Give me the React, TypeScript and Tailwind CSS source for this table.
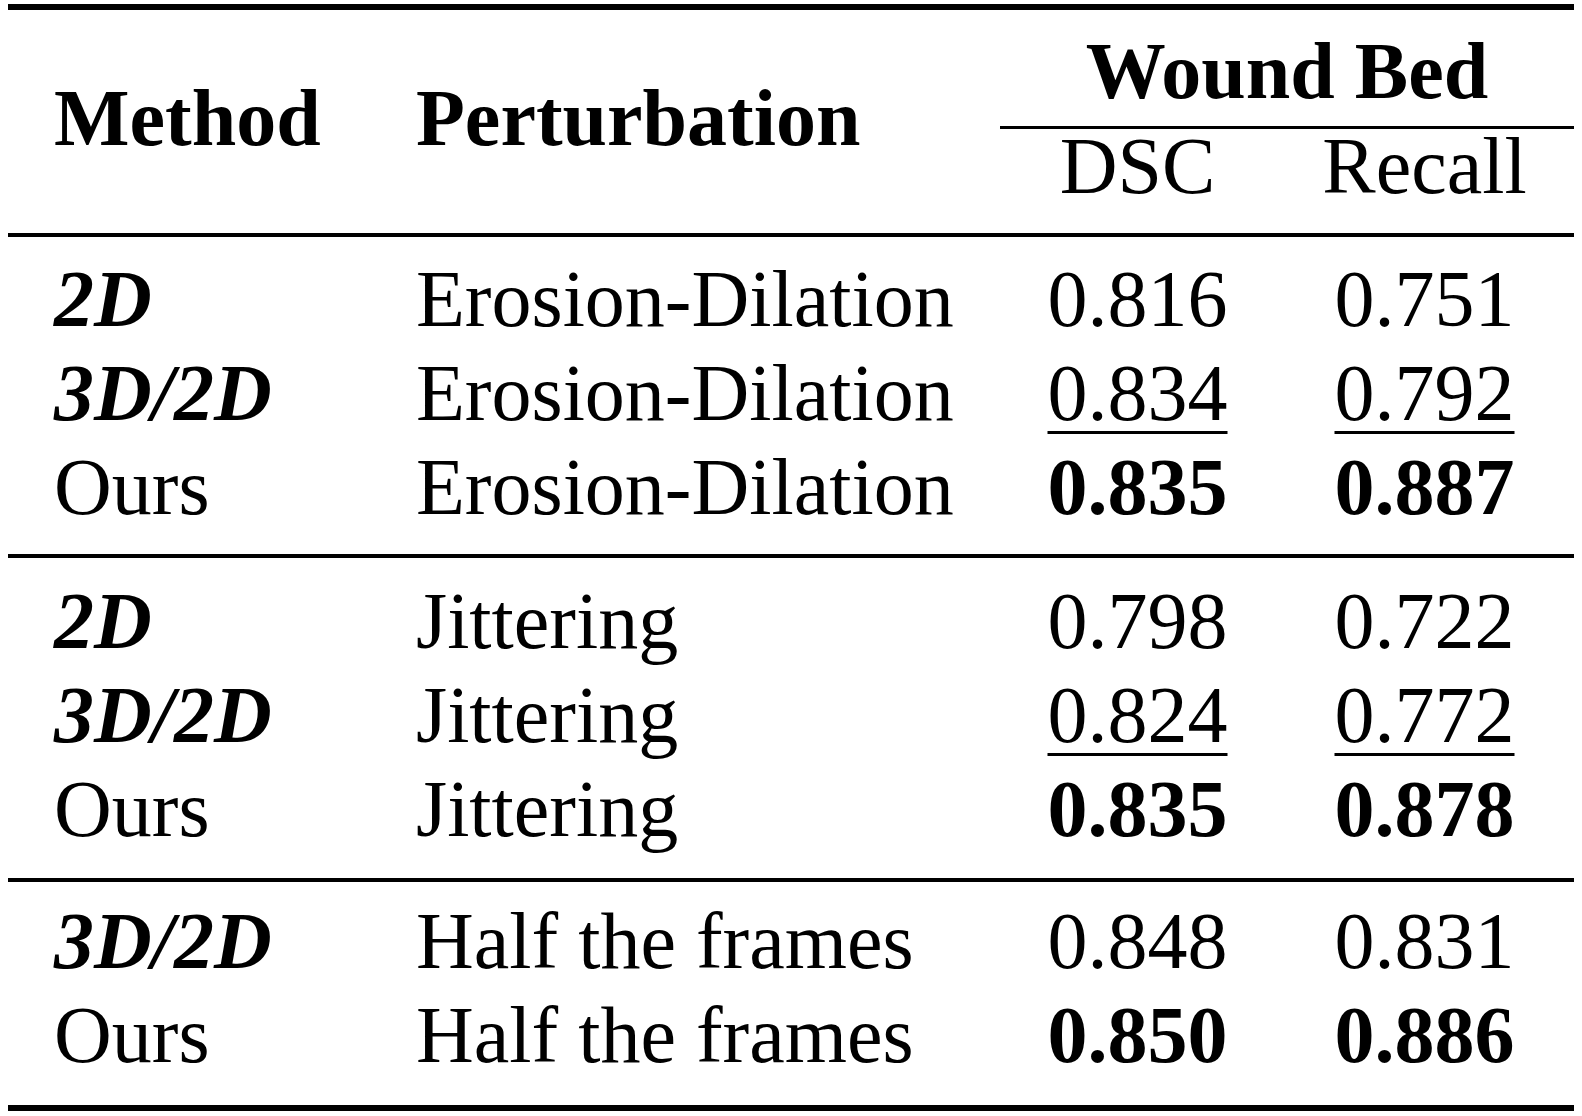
import React from "react";

type S = "n" | "u" | "b";
type Row = { m: string; mi: boolean; p: string; d: string; ds: S; r: string; rs: S };

const groups: { pt: string; pb: string; rows: Row[] }[] = [
  {
    pt: "pt-[15px]",
    pb: "pb-[20px]",
    rows: [
      { m: "2D", mi: true, p: "Erosion-Dilation", d: "0.816", ds: "n", r: "0.751", rs: "n" },
      { m: "3D/2D", mi: true, p: "Erosion-Dilation", d: "0.834", ds: "u", r: "0.792", rs: "u" },
      { m: "Ours", mi: false, p: "Erosion-Dilation", d: "0.835", ds: "b", r: "0.887", rs: "b" },
    ],
  },
  {
    pt: "pt-[16px]",
    pb: "pb-[22px]",
    rows: [
      { m: "2D", mi: true, p: "Jittering", d: "0.798", ds: "n", r: "0.722", rs: "n" },
      { m: "3D/2D", mi: true, p: "Jittering", d: "0.824", ds: "u", r: "0.772", rs: "u" },
      { m: "Ours", mi: false, p: "Jittering", d: "0.835", ds: "b", r: "0.878", rs: "b" },
    ],
  },
  {
    pt: "pt-[12px]",
    pb: "pb-[23px]",
    rows: [
      { m: "3D/2D", mi: true, p: "Half the frames", d: "0.848", ds: "n", r: "0.831", rs: "n" },
      { m: "Ours", mi: false, p: "Half the frames", d: "0.850", ds: "b", r: "0.886", rs: "b" },
    ],
  },
];

const numClass = (s: S) =>
  s === "b"
    ? "font-bold"
    : s === "u"
    ? "underline decoration-[3px] underline-offset-[11px] [text-decoration-skip-ink:none]"
    : "";

const COLS = "grid grid-cols-[408px_584px_275px_299px]";

export default function App() {
  return (
    <div className="w-[1582px] h-[1116px] bg-white text-black font-['Liberation_Serif',serif] text-[80px] leading-[94px] overflow-hidden">
      <div className="ml-[8px] w-[1566px] pt-[4px]">
        <div className="h-[6px] bg-black" />
        {/* header */}
        <div className={`${COLS} h-[223px] items-start`}>
          <div className="pl-[46px] pt-[61px] font-bold whitespace-nowrap">Method</div>
          <div className="pt-[61px] font-bold whitespace-nowrap">Perturbation</div>
          <div className="col-span-2 flex flex-col">
            <div className="pt-[14px] font-bold text-center whitespace-nowrap">Wound Bed</div>
            <div className="mt-[8px] h-[3px] bg-black" />
            <div className="mt-[7px] grid grid-cols-[275px_299px] leading-[60px]">
              <div className="text-center">DSC</div>
              <div className="text-center">Recall</div>
            </div>
          </div>
        </div>
        <div className="h-[4px] bg-black" />
        {groups.map((g, gi) => (
          <React.Fragment key={gi}>
            <div className={`${g.pt} ${g.pb}`}>
              {g.rows.map((r, ri) => (
                <div key={ri} className={COLS}>
                  <div className={`pl-[46px] whitespace-nowrap ${r.mi ? "font-bold italic" : ""}`}>{r.m}</div>
                  <div className="whitespace-nowrap">{r.p}</div>
                  <div className="text-center">
                    <span className={numClass(r.ds)}>{r.d}</span>
                  </div>
                  <div className="text-center">
                    <span className={numClass(r.rs)}>{r.r}</span>
                  </div>
                </div>
              ))}
            </div>
            <div className={gi === groups.length - 1 ? "h-[6px] bg-black" : "h-[4px] bg-black"} />
          </React.Fragment>
        ))}
      </div>
    </div>
  );
}
